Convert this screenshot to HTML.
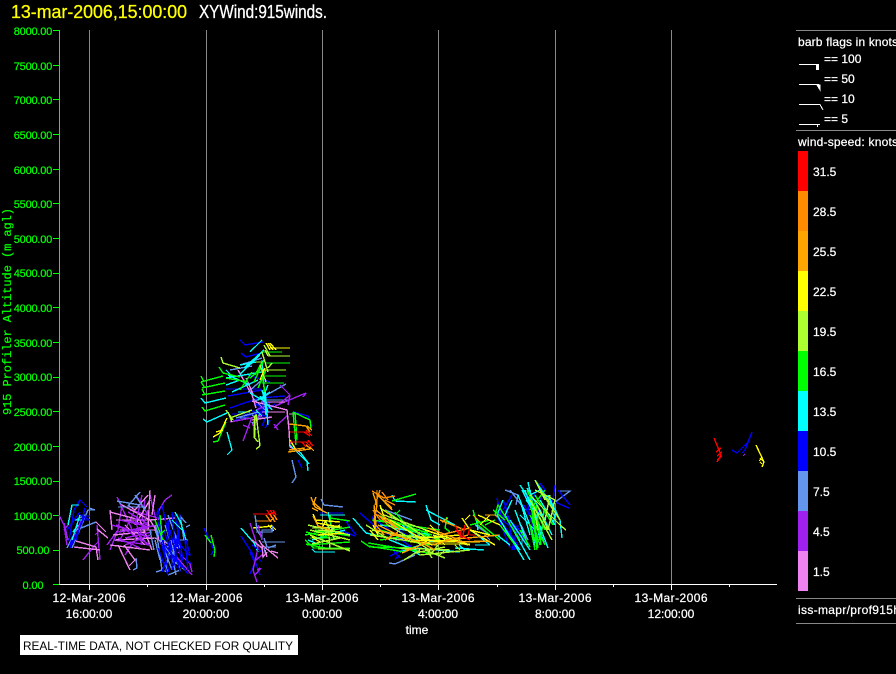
<!DOCTYPE html>
<html><head><meta charset="utf-8"><style>
html,body{margin:0;padding:0;background:#000;width:896px;height:674px;overflow:hidden}
svg{display:block}
text{font-family:"Liberation Sans",sans-serif}
path{fill:none;stroke-width:1}
.d path{stroke-width:1.4}
.b{stroke-width:.25}
</style></head><body>
<svg width="896" height="674" viewBox="0 0 896 674" shape-rendering="crispEdges">
<rect width="896" height="674" fill="#000"/>
<text transform="translate(11,18) scale(1,1.13)" font-size="16" fill="#ff0" stroke="#ff0" class="b" textLength="176" lengthAdjust="spacingAndGlyphs">13-mar-2006,15:00:00</text>
<text transform="translate(199,18) scale(1,1.13)" font-size="16" fill="#fff" stroke="#fff" class="b" textLength="128" lengthAdjust="spacingAndGlyphs">XYWind:915winds.</text>

<path stroke="#888" d="M89.5 30V590M206.5 30V590M322.5 30V590M438.5 30V590M555.5 30V590M671.5 30V590"/>
<path stroke="#0f0" d="M59.5 30V585M53 30.5H59M53 65.5H59M53 99.5H59M53 134.5H59M53 169.5H59M53 203.5H59M53 238.5H59M53 273.5H59M53 307.5H59M53 342.5H59M53 377.5H59M53 411.5H59M53 446.5H59M53 481.5H59M53 515.5H59M53 550.5H59M53 584.5H59"/>
<path stroke="#fff" d="M59 584.5H777M89.5 584V590M206.5 584V590M322.5 584V590M438.5 584V590M555.5 584V590M671.5 584V590M147.5 584V587M264.5 584V587M380.5 584V587M497.5 584V587M613.5 584V587M729.5 584V587"/>

<g fill="#0f0" stroke="#0f0" class="b" font-size="11" text-anchor="middle">
<text x="33" y="35" textLength="38.5">8000.00</text><text x="33" y="70" textLength="38.5">7500.00</text><text x="33" y="104" textLength="38.5">7000.00</text><text x="33" y="139" textLength="38.5">6500.00</text><text x="33" y="174" textLength="38.5">6000.00</text><text x="33" y="208" textLength="38.5">5500.00</text><text x="33" y="243" textLength="38.5">5000.00</text><text x="33" y="277" textLength="38.5">4500.00</text><text x="33" y="312" textLength="38.5">4000.00</text><text x="33" y="347" textLength="38.5">3500.00</text><text x="33" y="381" textLength="38.5">3000.00</text><text x="33" y="416" textLength="38.5">2500.00</text><text x="33" y="451" textLength="38.5">2000.00</text><text x="33" y="485" textLength="38.5">1500.00</text><text x="33" y="520" textLength="38.5">1000.00</text><text x="33" y="554" textLength="33">500.00</text><text x="33" y="589" textLength="21">0.00</text>
</g>
<text transform="translate(11,415) rotate(-90)" font-size="12" fill="#0f0" stroke="#0f0" class="b" style="font-family:'Liberation Mono',monospace" textLength="207">915 Profiler Altitude (m agl)</text>

<g fill="#fff" stroke="#fff" class="b" font-size="12" text-anchor="middle">
<text x="89" y="602" textLength="73">12-Mar-2006</text><text x="89" y="618">16:00:00</text>
<text x="206" y="602" textLength="73">12-Mar-2006</text><text x="206" y="618">20:00:00</text>
<text x="322" y="602" textLength="73">13-Mar-2006</text><text x="322" y="618">0:00:00</text>
<text x="438" y="602" textLength="73">13-Mar-2006</text><text x="438" y="618">4:00:00</text>
<text x="555" y="602" textLength="73">13-Mar-2006</text><text x="555" y="618">8:00:00</text>
<text x="671" y="602" textLength="73">13-Mar-2006</text><text x="671" y="618">12:00:00</text>
<text x="417" y="634">time</text>
</g>
<rect x="20" y="635" width="278" height="20" fill="#fff"/>
<text x="23" y="650" font-size="12" fill="#000" textLength="270" lengthAdjust="spacingAndGlyphs">REAL-TIME DATA, NOT CHECKED FOR QUALITY</text>

<!-- legend -->
<path stroke="#888" d="M796 30.5H896M796 130.5H896M796 598.5H896M796 623.5H896"/>
<g fill="#fff" stroke="#fff" class="b" font-size="12">
<text x="798" y="46" textLength="100">barb flags in knots</text>
<text x="824" y="63">== 100</text><text x="824" y="83">== 50</text><text x="824" y="103">== 10</text><text x="824" y="123">== 5</text>
<text x="798" y="146" textLength="100">wind-speed: knots</text>
<text x="798" y="614" textLength="102">iss-mapr/prof915h</text>
<text x="813" y="176">31.5</text><text x="813" y="216">28.5</text><text x="813" y="256">25.5</text><text x="813" y="296">22.5</text><text x="813" y="336">19.5</text><text x="813" y="376">16.5</text><text x="813" y="416">13.5</text><text x="813" y="456">10.5</text><text x="813" y="496">7.5</text><text x="813" y="536">4.5</text><text x="813" y="576">1.5</text>
</g>
<path stroke="#fff" d="M799 64.5H817M799 84.5H819M799 104.5H820L823 110M799 124.5H820M817.5 124V127"/>
<rect x="816" y="64" width="3" height="6" fill="#fff"/>
<path d="M817 85H820V90Z" fill="#fff" style="fill:#fff;stroke:#fff"/>
<rect x="798" y="151" width="10" height="40" fill="#f00"/>
<rect x="798" y="191" width="10" height="40" fill="#ff8c00"/>
<rect x="798" y="231" width="10" height="40" fill="#ffa500"/>
<rect x="798" y="271" width="10" height="40" fill="#ff0"/>
<rect x="798" y="311" width="10" height="40" fill="#adff2f"/>
<rect x="798" y="351" width="10" height="40" fill="#0f0"/>
<rect x="798" y="391" width="10" height="40" fill="#0ff"/>
<rect x="798" y="431" width="10" height="40" fill="#00f"/>
<rect x="798" y="471" width="10" height="40" fill="#6495ed"/>
<rect x="798" y="511" width="10" height="40" fill="#a020f0"/>
<rect x="798" y="551" width="10" height="40" fill="#ee82ee"/>

<g class="d">
<!-- upper cluster -->
<path stroke="#00f" d="M240 340L245 345L263 342M241 353L246 357L262 353M226 389H262M228 396L262 390M230 408L268 395M232 414H262M233 421L265 410M254 405L272 402M258 415L275 404M265 428L270 420M262 418L262 405M268 412L262 426M293 412L308 416L312 426M298 460L302 468M260 398L285 396M248 375L270 382M256 404L268 412M255 412L268 404M258 408H272M262 400L266 416M250 410L270 418"/>
<path stroke="#6495ed" d="M230 370L252 366M240 365L262 358M254 402L286 384M236 418L258 412M252 422L256 430M258 420L252 415M262 400H290M248 392L264 378M292 460L296 477L292 483M265 410L253 398M240 418H268M253 423L260 414"/>
<path stroke="#a020f0" d="M230 422L262 416M275 406L306 393M306 393L303 397M243 441L252 417M252 425L258 421M243 425L250 428M274 428L288 415M274 424L278 430M280 385L290 395L288 405M290 395L278 405M256 410L270 404"/>
<path stroke="#ee82ee" d="M238 370L252 395L256 408M246 378L253 394M252 401L287 410L289 430L290 447L300 452M262 412H285M252 420L272 417M254 425L254 436M261 402H285M289 414H299"/>
<path stroke="#0ff" d="M201 398L205 403L226 398M203 419L207 422L227 413M227 432L232 450L227 455M226 378L262 372M226 370L236 380M240 365L256 362M250 352L262 340M240 374L260 355M262 360L266 415M268 385L262 400M262 390L268 412M258 400L270 392M226 385L240 380M250 393L266 402M290 445L307 462L308 471M300 452L309 464M238 412H250M265 390L268 425M244 368L264 350M228 375L250 385M232 392L258 380M256 410L262 416M260 396L272 410"/>
<path stroke="#0f0" d="M201 382L223 376M204 382L201 376M202 388L225 383M205 388L201 382M202 395L225 391M205 395L202 389M202 407L205 411L225 405M213 442L218 441L226 422M219 367L223 373L240 377M265 363H290M265 376H286M262 383H284M265 392L262 375M255 375L262 362M293 412L296 445M295 412L297 440M293 412L310 420L311 428M262 352H282M240 390L252 372M226 378L248 382M258 388L266 370M250 378L262 368M254 382L264 360"/>
<path stroke="#adff2f" d="M221 357L223 363L240 368M268 356H290M262 370H286M256 362H262M260 365L266 382M230 418L252 410M226 410L233 420M255 437L255 415M258 442L254 437L255 415M256 414L260 446M260 446L256 449M272 363L268 368M265 350L268 356M228 412L232 422M264 345L270 356M262 352L268 372"/>
<path stroke="#ff0" d="M270 348H290M266 343L270 350M268 343L273 350M270 343L276 350M227 418L220 433L213 437M223 430L216 432M260 380L265 368M290 440L296 450"/>
<path stroke="#ffa500" d="M289 424L306 426L310 432M288 452L310 449M289 450L305 448M310 447L314 451M306 445L311 449M307 426L312 430"/>
<path stroke="#f00" d="M290 432H310M290 442H310M306 430L312 436M304 432L310 436M308 440L313 446M306 442L311 447M302 442L306 447"/>

<!-- lower left -->
<path stroke="#a020f0" d="M59 515L64 525L67 545M64 523L68 540M68 525L64 530M83 517L72 540M97 525L100 560M98 542L95 545L83 560M100 530L95 535M122 505L118 530L110 550M118 530L107 545M117 497L136 538M135 510L120 540M138 528L158 525M150 495L156 520M136 495L148 515M124 520L150 525M113 540L150 545M125 555L132 544M130 510L165 520M116 525L150 538M148 545L135 530M158 512L165 500L172 495M178 552L190 564L192 572M175 555L192 575M145 500L142 520"/>
<path stroke="#ee82ee" d="M96 522L106 532M97 529L108 538M74 547L100 550M76 541L96 547L98 560M110 512L140 520L152 550M118 545L130 570M124 545L135 560L129 566M150 490L148 530M148 495L135 510L128 505M113 535L145 532M122 505L150 520L175 518M116 520L150 520L165 545M120 530L155 530L164 550M115 540L155 538L178 548M110 545L150 550M110 510L112 530M125 525L145 545M135 525L150 500M155 495L152 515"/>
<path stroke="#a020f0" d="M120 520L150 527M118 532L148 528M125 538L152 532M128 512L148 524M122 528L150 545M130 530L160 525M135 518L142 545M142 495L136 522M118 538L140 548M125 545L150 535M148 510L140 535M112 525L135 532"/>
<path stroke="#6495ed" d="M67 548L76 530L96 522M72 548L88 510H95L89 508M85 515L76 520M117 501L140 505M118 507H145M122 505L118 501M156 529L162 570L156 572M160 530L168 560M165 525L180 570L168 575M175 535L172 560L185 570M168 515L180 548M180 515L184 540M170 545L176 575M190 525L186 527M160 555L168 572M150 530L154 550M172 540L165 572M155 540L160 560M186 523L180 516M136 558L137 568L133 570M160 540L175 560M140 492L128 506M135 495L145 510M175 540H188M158 535L175 550M163 545L172 548M155 525L172 570M168 535L178 565"/>
<path stroke="#00f" d="M69 541L74 510L80 500L87 507M70 548L80 515L90 520M72 545L85 516H90M76 540L82 520L85 508M70 545L78 522M67 530L80 512M90 520L80 520M158 508L164 546L170 560M162 505L172 550M180 514L178 545L182 562M172 512L176 555L172 570M168 520L172 565M176 540L190 556M160 525L166 560L162 572M164 530L176 568M186 560L192 564M186 540L190 555M184 530L188 570M178 560L188 574M165 545L182 568M161 542L169 572M204 528L214 550L211 555M175 515L183 560M170 530L180 572M157 512L160 540M178 530L174 565M158 548L168 575"/>
<path stroke="#0ff" d="M79 505H72L68 525M75 520H82M78 525L73 532M80 515L72 540M172 520L182 530M175 512L182 525M180 520L186 540"/>
<path stroke="#0f0" d="M211 535L215 550L214 557M205 535L211 543M160 515L162 535M160 535L165 530M155 520L163 540"/>

<!-- small middle cluster -->
<path stroke="#f00" d="M253 514H270L275 512M270 510L276 518M267 510L272 518M273 510L276 515"/>
<path stroke="#ff8c00" d="M255 521H270L274 518M270 514L275 522M266 515L271 522M274 515L277 520"/>
<path stroke="#ff0" d="M253 528L273 526M268 525L274 531M271 525L276 530M272 530H274"/>
<path stroke="#6495ed" d="M255 515L257 530L262 538L262 530L272 530M256 532H272L273 526M262 542H285M264 538L267 547M262 547H276M268 548L276 545M264 548L266 555"/>
<path stroke="#0ff" d="M241 528L254 543L258 552"/>
<path stroke="#00f" d="M241 536L252 553M252 553L260 575M250 552L255 563M255 563L250 574M256 556L262 562M252 545L262 552"/>
<path stroke="#a020f0" d="M250 523L258 548L253 570L257 582M258 525L262 540M257 570L260 568M256 560L262 555M255 575L261 568"/>
<path stroke="#ee82ee" d="M259 540L262 545L278 558M262 545L263 557L267 552M252 540L262 548M265 550L267 557M271 551L278 553"/>

<!-- cluster A -->
<path stroke="#00f" d="M320 513H343M345 520L356 535M340 530L355 536"/>
<path stroke="#6495ed" d="M321 499L324 505L343 507"/>
<path stroke="#0ff" d="M328 512L332 530M312 549L315 552H335M320 515L345 515M312 540L345 530M308 540L320 545"/>
<path stroke="#0f0" d="M330 518L350 521M305 535L350 527M307 545L350 542M330 515L332 533M305 540L314 548L350 548M320 540L335 530M315 530L350 536M306 532L330 538M310 538L345 538M306 544L325 548"/>
<path stroke="#adff2f" d="M308 525L350 535M310 535L350 551M312 544L340 538M310 530L350 540M318 549L350 549M312 528L342 527M328 525L330 548M322 535L340 525M318 530L340 532M325 520L335 540"/>
<path stroke="#ff0" d="M313 514L317 523L340 527M316 520L340 522M318 535L344 533M322 528L326 520M312 537L320 542"/>
<path stroke="#ffa500" d="M313 516L318 526L330 530M311 497L315 507L327 513M316 497L313 505M314 503L322 510M312 508L318 511"/>

<!-- cluster B -->
<path stroke="#00f" d="M360 513L376 527L392 536M377 511L372 518L390 530M389 545L400 558M395 535L415 550M390 556L412 545M400 555L395 559M395 522L415 530M418 542L390 525"/>
<path stroke="#6495ed" d="M389 563L395 564L415 555M393 522L405 530M385 510L412 520M395 540L420 535M485 535L490 540M475 525L490 535"/>
<path stroke="#0ff" d="M353 518L366 533L400 540M392 495L395 501L416 502M426 505L431 520L440 525M426 510L455 525M390 540L420 552M395 528L430 535M417 548L460 552M455 548L484 550M459 545L465 550M471 530L490 545M476 518L478 530M490 545H475M403 545L420 555M402 525L418 540M380 525L420 530M400 552L435 540"/>
<path stroke="#0f0" d="M392 501L416 494M361 541L370 547L416 548M368 543L440 555M385 510L420 535M380 520L440 540M377 515L432 535M395 512L410 530M372 520L440 530M395 515L400 510M447 517L445 528L450 532M470 525L490 520M473 510L476 520M476 520L500 540M478 525L490 535M485 525L495 520M375 535L430 545M384 525L428 532M380 530L415 540M380 540L412 535M368 546L405 552"/>
<path stroke="#adff2f" d="M366 525L390 540M370 535L437 545M420 555L470 550M425 550L445 558M445 550L440 555M404 560L420 550M428 552L432 558M372 530L430 540M388 525L430 550M380 508L430 540M430 555L438 545M455 545L460 550M384 515L440 535M433 535L468 545M400 548L450 550M415 553L445 547M390 535L440 538"/>
<path stroke="#ff0" d="M370 530L378 540M373 525L378 535M390 520L432 545M415 540L480 542M420 538L460 535M430 525L445 540M425 540H440M440 540L445 545M462 518L470 530L490 535M465 520L470 515M478 515L500 525M470 530L495 545M473 515L478 520M425 530L470 545M480 525L490 515M410 542H480M432 544H470M380 505L385 520"/>
<path stroke="#ffa500" d="M373 493L377 505L374 520L376 530L420 542L435 550M378 495L392 510M383 500L392 508M377 490V505M374 505L376 525L384 535M378 525L408 540M376 510L400 530M385 510L392 517M378 515L396 528M402 553L428 542M405 550L415 548M440 520L465 530M428 528L460 540M442 522L448 518M445 540L500 535M455 542L490 541M485 515H495L500 520M473 515L480 522M432 545L468 535M440 535L470 528"/>
<path stroke="#ff8c00" d="M372 491L384 498L395 496M378 515L388 525M373 510L380 520M385 540L398 532M380 490L375 505M382 492L388 500M395 505L385 500"/>
<path stroke="#f00" d="M455 525L460 535L470 540M462 528L460 535M465 525L463 535M470 527L468 535M456 530L462 538M470 535H476"/>

<!-- cluster C -->
<path stroke="#6495ed" d="M505 490L518 495L516 505M510 490L525 510M560 491H570L558 500L552 505M552 510L556 520M521 525L528 540M522 545L522 530"/>
<path stroke="#00f" d="M497 498L502 520L515 530M495 510L518 528L525 540M503 500L508 513M512 495L503 510M524 505L532 520M525 490L533 530L540 545M537 490L530 505M540 483L545 490L540 500M558 490L570 505M550 500L569 508M497 515L510 548M507 515L515 550M518 525L512 550M555 485L553 500M500 520L518 545M505 510L520 540M530 500L545 520"/>
<path stroke="#0ff" d="M503 500L497 515L524 560M512 500L505 515L530 560M518 495L532 530L535 547M525 490L545 545M520 485L530 500L548 548M530 490L540 540M535 480L555 510M540 490L530 495M527 488L540 510L552 535M540 500L555 525M548 495L560 520L562 538M505 530L520 550M497 535L510 545M510 520L530 550M520 515L535 530M530 505L540 530M526 500L545 520M553 525L556 510M522 490L542 530M528 482L536 520M515 510L528 545M520 500L530 535"/>
<path stroke="#0f0" d="M495 515L498 505L520 540M493 510L505 520M529 523L538 548M530 525L535 550M535 525L537 550M532 520L540 545M530 515L545 545M520 530L530 547M500 525L515 545M545 490L530 510M527 490L545 530M535 495L553 525M544 510L541 540M533 510L538 548M536 505L541 545M531 505L536 540"/>
<path stroke="#adff2f" d="M535 490L555 500M530 495L560 525L566 530M540 490L560 520M535 480L545 500M530 500L552 540M550 495L545 520M555 500L548 530M545 510L560 525M537 505L548 530M534 510L538 530"/>

<!-- far right -->
<path stroke="#f00" d="M714 438L721 455L717 462M721 448L716 452M722 452L717 456M722 456L717 460"/>
<path stroke="#00f" d="M752 432L745 450L742 453M732 450L737 453L748 442M750 438L746 445"/>
<path stroke="#a020f0" d="M743 456L745 454"/>
<path stroke="#ff0" d="M756 445L764 462L762 467M760 458L764 462M761 459L759 461M762 464L760 462"/>
</g>
</svg>
</body></html>
